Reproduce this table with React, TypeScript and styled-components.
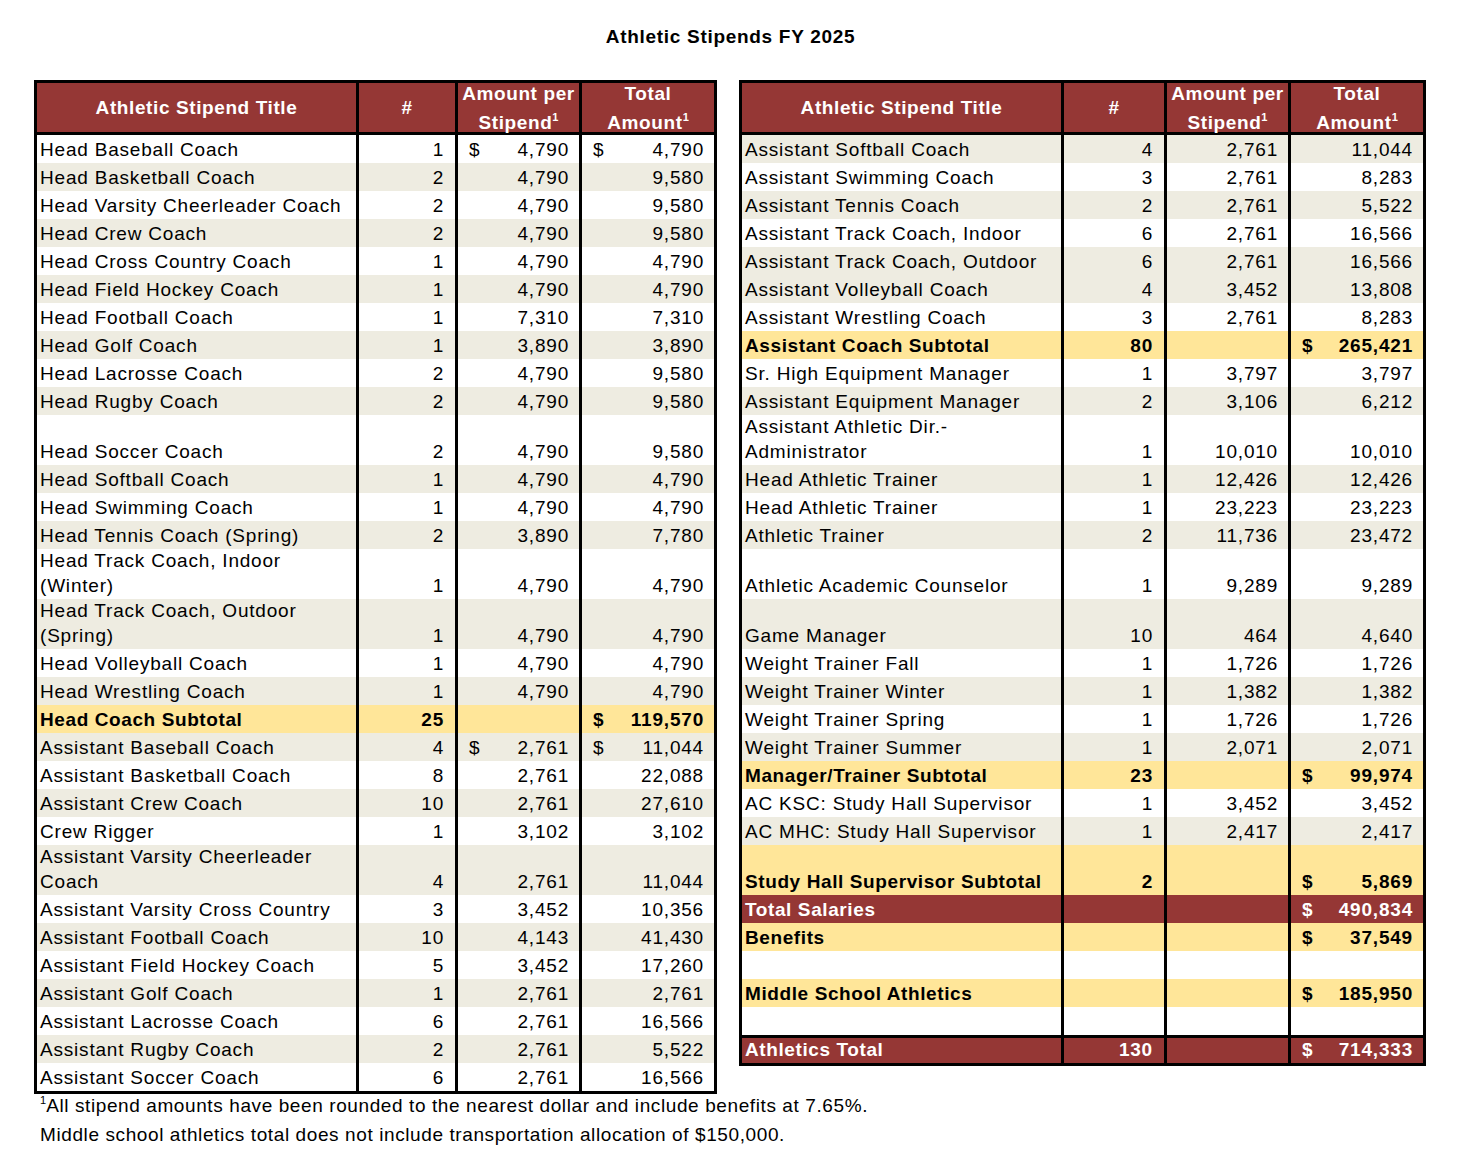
import React from 'react';
import styled, { createGlobalStyle } from 'styled-components';

const GlobalStyle = createGlobalStyle`
  body {
    margin: 0;
    background: #fff;
    color: #000;
    font-family: "Liberation Sans", Arial, sans-serif;
  }
`;

const fills = {
  w: '#ffffff',
  g: '#eeece1',
  y: '#ffe699',
  r: '#953735',
};

type Kind = keyof typeof fills;

interface Row {
  title: string;
  n?: string;
  per?: string;
  total?: string;
  perSign?: boolean;
  totalSign?: boolean;
  kind: Kind;
  tall?: boolean;
  rule?: boolean;
}

const row = (
  title: string,
  n: string,
  per: string,
  total: string,
  kind: Kind,
  extra: Partial<Row> = {}
): Row => ({ title, n, per, total, kind, ...extra });

const leftRows: Row[] = [
  row('Head Baseball Coach', '1', '4,790', '4,790', 'w', { perSign: true, totalSign: true }),
  row('Head Basketball Coach', '2', '4,790', '9,580', 'g'),
  row('Head Varsity Cheerleader Coach', '2', '4,790', '9,580', 'w'),
  row('Head Crew Coach', '2', '4,790', '9,580', 'g'),
  row('Head Cross Country Coach', '1', '4,790', '4,790', 'w'),
  row('Head Field Hockey Coach', '1', '4,790', '4,790', 'g'),
  row('Head Football Coach', '1', '7,310', '7,310', 'w'),
  row('Head Golf Coach', '1', '3,890', '3,890', 'g'),
  row('Head Lacrosse Coach', '2', '4,790', '9,580', 'w'),
  row('Head Rugby Coach', '2', '4,790', '9,580', 'g'),
  row('Head Soccer Coach', '2', '4,790', '9,580', 'w', { tall: true }),
  row('Head Softball Coach', '1', '4,790', '4,790', 'g'),
  row('Head Swimming Coach', '1', '4,790', '4,790', 'w'),
  row('Head Tennis Coach (Spring)', '2', '3,890', '7,780', 'g'),
  row('Head Track Coach, Indoor\n(Winter)', '1', '4,790', '4,790', 'w', { tall: true }),
  row('Head Track Coach, Outdoor\n(Spring)', '1', '4,790', '4,790', 'g', { tall: true }),
  row('Head Volleyball Coach', '1', '4,790', '4,790', 'w'),
  row('Head Wrestling Coach', '1', '4,790', '4,790', 'g'),
  row('Head Coach Subtotal', '25', '', '119,570', 'y', { totalSign: true }),
  row('Assistant Baseball Coach', '4', '2,761', '11,044', 'g', { perSign: true, totalSign: true }),
  row('Assistant Basketball Coach', '8', '2,761', '22,088', 'w'),
  row('Assistant Crew Coach', '10', '2,761', '27,610', 'g'),
  row('Crew Rigger', '1', '3,102', '3,102', 'w'),
  row('Assistant Varsity Cheerleader\nCoach', '4', '2,761', '11,044', 'g', { tall: true }),
  row('Assistant Varsity Cross Country', '3', '3,452', '10,356', 'w'),
  row('Assistant Football Coach', '10', '4,143', '41,430', 'g'),
  row('Assistant Field Hockey Coach', '5', '3,452', '17,260', 'w'),
  row('Assistant Golf Coach', '1', '2,761', '2,761', 'g'),
  row('Assistant Lacrosse Coach', '6', '2,761', '16,566', 'w'),
  row('Assistant Rugby Coach', '2', '2,761', '5,522', 'g'),
  row('Assistant Soccer Coach', '6', '2,761', '16,566', 'w'),
];

const rightRows: Row[] = [
  row('Assistant Softball Coach', '4', '2,761', '11,044', 'g'),
  row('Assistant Swimming Coach', '3', '2,761', '8,283', 'w'),
  row('Assistant Tennis Coach', '2', '2,761', '5,522', 'g'),
  row('Assistant Track Coach, Indoor', '6', '2,761', '16,566', 'w'),
  row('Assistant Track Coach, Outdoor', '6', '2,761', '16,566', 'g'),
  row('Assistant Volleyball Coach', '4', '3,452', '13,808', 'g'),
  row('Assistant Wrestling Coach', '3', '2,761', '8,283', 'w'),
  row('Assistant Coach Subtotal', '80', '', '265,421', 'y', { totalSign: true }),
  row('Sr. High Equipment Manager', '1', '3,797', '3,797', 'w'),
  row('Assistant Equipment Manager', '2', '3,106', '6,212', 'g'),
  row('Assistant Athletic Dir.-\nAdministrator', '1', '10,010', '10,010', 'w', { tall: true }),
  row('Head Athletic Trainer', '1', '12,426', '12,426', 'g'),
  row('Head Athletic Trainer', '1', '23,223', '23,223', 'w'),
  row('Athletic Trainer', '2', '11,736', '23,472', 'g'),
  row('Athletic Academic Counselor', '1', '9,289', '9,289', 'w', { tall: true }),
  row('Game Manager', '10', '464', '4,640', 'g', { tall: true }),
  row('Weight Trainer Fall', '1', '1,726', '1,726', 'w'),
  row('Weight Trainer Winter', '1', '1,382', '1,382', 'g'),
  row('Weight Trainer Spring', '1', '1,726', '1,726', 'w'),
  row('Weight Trainer Summer', '1', '2,071', '2,071', 'g'),
  row('Manager/Trainer Subtotal', '23', '', '99,974', 'y', { totalSign: true }),
  row('AC KSC: Study Hall Supervisor', '1', '3,452', '3,452', 'w'),
  row('AC MHC: Study Hall Supervisor', '1', '2,417', '2,417', 'g'),
  row('Study Hall Supervisor Subtotal', '2', '', '5,869', 'y', { totalSign: true, tall: true }),
  row('Total Salaries', '', '', '490,834', 'r', { totalSign: true }),
  row('Benefits', '', '', '37,549', 'y', { totalSign: true }),
  row('', '', '', '', 'w'),
  row('Middle School Athletics', '', '', '185,950', 'y', { totalSign: true }),
  row('', '', '', '', 'w'),
  row('Athletics Total', '130', '', '714,333', 'r', { totalSign: true, rule: true }),
];

const Page = styled.div`
  width: 1461px;
  padding-top: 26px;
  padding-bottom: 30px;
  box-sizing: border-box;
`;

const Heading = styled.h1`
  margin: 0;
  text-align: center;
  font-size: 19px;
  line-height: 22px;
  font-weight: bold;
  letter-spacing: 0.7px;
`;

const Tables = styled.div`
  display: flex;
  align-items: flex-start;
  gap: 22px;
  margin: 32px 0 0 34px;
`;

const Table = styled.div<{ $cols: string }>`
  display: grid;
  grid-template-columns: ${(p) => p.$cols};
  column-gap: 3px;
  border: 3px solid #000;
  background: #000;
  font-size: 19px;
  letter-spacing: 0.8px;
`;

const Head = styled.div`
  height: 49px;
  margin-bottom: 3px;
  background: ${fills.r};
  color: #fff;
  font-weight: bold;
  line-height: 29px;
  letter-spacing: 0.6px;
  display: flex;
  align-items: center;
  justify-content: center;
  text-align: center;
`;

const Sup = styled.sup`
  font-size: 11px;
  line-height: 0;
  vertical-align: 8px;
  letter-spacing: 0;
`;

const Cell = styled.div<{ $kind: Kind; $tall?: boolean; $rule?: boolean }>`
  box-sizing: border-box;
  height: ${(p) => (p.$tall ? 50 : 28)}px;
  background: ${(p) => fills[p.$kind]};
  color: ${(p) => (p.$kind === 'r' ? '#fff' : '#000')};
  font-weight: ${(p) => (p.$kind === 'r' || p.$kind === 'y' ? 'bold' : 'normal')};
  border-top: ${(p) => (p.$rule ? '3px solid #000' : 'none')};
  line-height: 25px;
  padding-bottom: 1px;
  display: flex;
  align-items: flex-end;
  white-space: pre-line;
`;

const TitleCell = styled(Cell)`
  padding-left: 3px;
  letter-spacing: ${(p) => (p.$kind === 'y' || p.$kind === 'r' ? '0.6px' : '0.8px')};
`;

const NumCell = styled(Cell)`
  justify-content: flex-end;
  padding-right: 11px;
`;

const MoneyCell = styled(Cell)`
  justify-content: space-between;
  padding-left: 11px;
  padding-right: 10px;
`;

const Notes = styled.div`
  margin: -3px 0 0 40px;
  font-size: 19px;
  line-height: 29px;
  letter-spacing: 0.6px;
`;

function Money({ r, value, sign }: { r: Row; value?: string; sign?: boolean }) {
  return (
    <MoneyCell $kind={r.kind} $tall={r.tall} $rule={r.rule}>
      <span>{sign ? '$' : ''}</span>
      <span>{value}</span>
    </MoneyCell>
  );
}

function Stipends({ rows, cols }: { rows: Row[]; cols: string }) {
  return (
    <Table $cols={cols}>
      <Head>Athletic Stipend Title</Head>
      <Head>#</Head>
      <Head>
        <div>
          Amount per
          <br />
          Stipend<Sup>1</Sup>
        </div>
      </Head>
      <Head>
        <div>
          Total
          <br />
          Amount<Sup>1</Sup>
        </div>
      </Head>
      {rows.map((r, i) => (
        <React.Fragment key={i}>
          <TitleCell $kind={r.kind} $tall={r.tall} $rule={r.rule}>
            {r.title}
          </TitleCell>
          <NumCell $kind={r.kind} $tall={r.tall} $rule={r.rule}>
            {r.n}
          </NumCell>
          <Money r={r} value={r.per} sign={r.perSign} />
          <Money r={r} value={r.total} sign={r.totalSign} />
        </React.Fragment>
      ))}
    </Table>
  );
}

export default function App() {
  return (
    <Page>
      <GlobalStyle />
      <Heading>Athletic Stipends FY 2025</Heading>
      <Tables>
        <Stipends rows={leftRows} cols="319px 96px 121px 132px" />
        <Stipends rows={rightRows} cols="319px 100px 121px 132px" />
      </Tables>
      <Notes>
        <div>
          <Sup>1</Sup>All stipend amounts have been rounded to the nearest dollar and include benefits at 7.65%.
        </div>
        <div>Middle school athletics total does not include transportation allocation of $150,000.</div>
      </Notes>
    </Page>
  );
}
